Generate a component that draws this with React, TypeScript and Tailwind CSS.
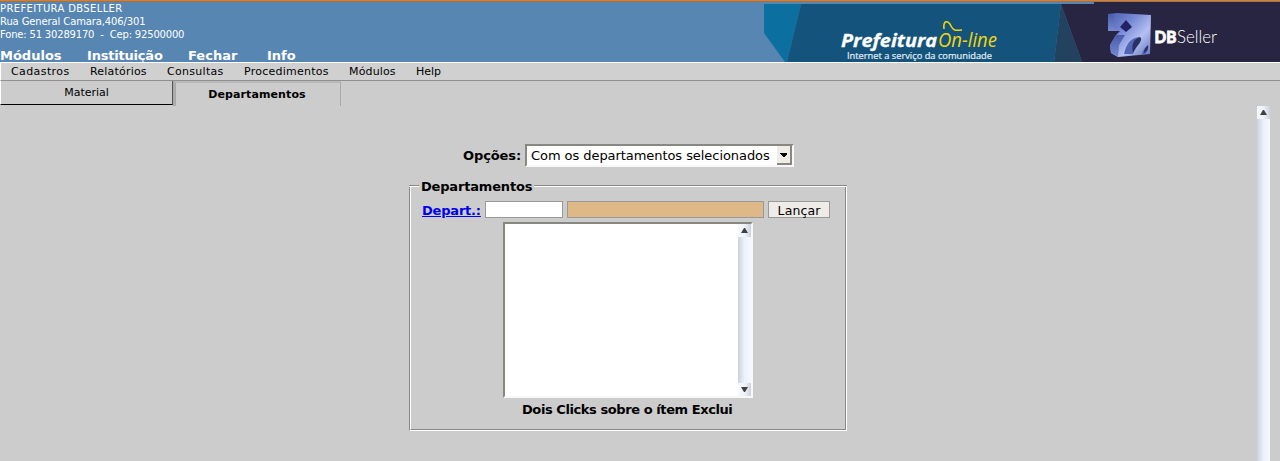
import type { ReactNode } from "react";

const headerLinks = [
  { label: "Módulos", cls: "w-[87px]" },
  { label: "Instituição", cls: "w-[101px] tracking-[-0.2px]" },
  { label: "Fechar", cls: "w-[79px]" },
  { label: "Info", cls: "w-[60px]" },
];

const menuItems = [
  { label: "Cadastros", cls: "w-[79px] tracking-[0.4px]" },
  { label: "Relatórios", cls: "w-[77px] tracking-[0.2px]" },
  { label: "Consultas", cls: "w-[77px] tracking-[0.3px]" },
  { label: "Procedimentos", cls: "w-[105px] tracking-[0.25px]" },
  { label: "Módulos", cls: "w-[67px] tracking-[0.15px]" },
  { label: "Help", cls: "w-[60px]" },
];

function Arrow({ down = false }: { down?: boolean }) {
  return (
    <div className="flex h-[13px] w-[13px] shrink-0 items-center justify-center bg-linear-to-r from-[#f7f9ff] via-[#eef2fa] to-[#ccd1dc]">
      <svg width="7" height="5" viewBox="0 0 7 5">
        <path d={down ? "M0 0H7L4 5H3Z" : "M3 0H4L7 5H0Z"} fill="#404040" />
      </svg>
    </div>
  );
}

function Track({ children }: { children?: ReactNode }) {
  return (
    <div className="flex w-[13px] shrink-0 flex-col justify-between bg-linear-to-r from-[#ccd1de] via-[#edf1fb] to-[#f5f8ff]">
      <Arrow />
      {children}
    </div>
  );
}

function Banner() {
  return (
    <svg width="516" height="60" viewBox="764 2 516 60" className="shrink-0">
      <defs>
        <linearGradient id="cube" x1="0" y1="0" x2="1" y2="1">
          <stop offset="0" stopColor="#4a5cac" />
          <stop offset=".35" stopColor="#7488d4" />
          <stop offset=".65" stopColor="#b4c0f2" />
          <stop offset="1" stopColor="#6272bd" />
        </linearGradient>
        <linearGradient id="side" x1="0" y1="0" x2="0" y2="1">
          <stop offset="0" stopColor="#4b5ba8" />
          <stop offset="1" stopColor="#7689d2" />
        </linearGradient>
      </defs>
      <path d="M764 4H801L787 62H785L764 33Z" fill="#0b6f9f" />
      <path d="M801 4H1061L1054 62H787Z" fill="#14547c" />
      <path d="M1061 4L1082 62H1054Z" fill="#22425f" />
      <path d="M1061 4H1094V2H1280V62H1082Z" fill="#272541" />
      <g fontFamily="Open Sans, sans-serif">
        <text x="841" y="47" fontSize="18.5" fontWeight="700" fontStyle="italic" fill="#fff" stroke="#fff" strokeWidth=".3" textLength="96" lengthAdjust="spacingAndGlyphs">Prefeitura</text>
        <text x="938" y="47" fontSize="20" fontStyle="italic" fill="#f2d60e" textLength="59" lengthAdjust="spacingAndGlyphs">On-line</text>
        <text x="847" y="59" fontSize="9.5" fill="#e6eef4" stroke="#e6eef4" strokeWidth=".2" textLength="145" lengthAdjust="spacingAndGlyphs">Internet a serviço da comunidade</text>
      </g>
      <path d="M944 29C943 20 948 20 951 26C954 32 957 30 962 30" fill="none" stroke="#f2d60e" strokeWidth="1.6" />
      <path d="M1108 14L1117 13L1151 15L1150 54L1118 57L1111 53L1110 45L1116 35L1120 31L1108 31Z" fill="url(#cube)" />
      <path d="M1108 14L1114 16V29L1120 31H1108Z" fill="url(#side)" />
      <path d="M1116 35L1110 45L1111 53L1118 57L1119 45L1125 35Z" fill="url(#side)" />
      <path d="M1126 20L1132 27L1126 32L1120 27Z" fill="#252165" />
      <path d="M1124 54C1126 45 1130 38 1139 37C1144 40 1136 43 1133 54ZM1142 54C1143 50 1146 46 1148 46Q1149 50 1145 54Z" fill="#5366b5" />
      <path d="M1133 53C1131 44 1134 39 1140 37C1144 40 1137 45 1133 53ZM1144 53Q1144 48 1148 45Q1149 50 1144 53Z" fill="#293064" />
      <g fontFamily="Lato, sans-serif" fill="#fff">
        <text x="1154.5" y="43" fontSize="17.5" fontWeight="900" stroke="#fff" strokeWidth=".8" textLength="22" lengthAdjust="spacingAndGlyphs">DB</text>
        <text x="1177" y="43" fontSize="18.5" fontWeight="300" textLength="40" lengthAdjust="spacingAndGlyphs">Seller</text>
      </g>
    </svg>
  );
}

export default function App() {
  return (
    <div className="flex h-[461px] w-[1280px] flex-col overflow-hidden bg-[#ccc] font-['DejaVu_Sans',sans-serif] text-black">
      <header className="flex h-[62px] shrink-0 flex-col bg-[#5786b2]">
        <div className="h-[2px] shrink-0 border-b border-[#a07250] bg-[#d28133]" />
        <div className="flex h-[60px] justify-between">
          <div className="flex flex-col text-white">
            <div className="whitespace-pre text-[10px] leading-[13px]">
              <div className="tracking-[0.36px]">PREFEITURA DBSELLER</div>
              <div className="tracking-[-0.12px]">Rua General Camara,406/301</div>
              <div className="tracking-[-0.18px]">Fone: 51 30289170  -  Cep: 92500000</div>
            </div>
            <nav className="mt-[7px] flex text-[13px] font-bold leading-[16px]">
              {headerLinks.map((l) => <div key={l.label} className={l.cls}>{l.label}</div>)}
            </nav>
          </div>
          <Banner />
        </div>
      </header>
      <nav className="flex h-[19px] shrink-0 border-b border-l border-t border-b-[#909090] border-l-white border-t-white bg-[#d0d0d0] pl-[10px] text-[11px] leading-[17px]">
        {menuItems.map((m) => <div key={m.label} className={m.cls}>{m.label}</div>)}
      </nav>
      <div className="flex h-[25px] shrink-0 text-[11px]">
        <div className="h-[24px] w-[173px] border-b border-l border-r border-b-black border-l-white border-r-[#555] text-center leading-[23px]">Material</div>
        <div className="h-[25px] w-[168px] border-l-[3px] border-r border-t-2 border-[#aaa] border-t-[#bababa] pr-[2px] text-center font-bold leading-[23px] tracking-[0.1px]">Departamentos</div>
      </div>
      <main className="flex h-[355px] pr-[10px]">
        <div className="flex w-[1257px] flex-col pt-[38px] text-[13px]">
          <div className="ml-[463px] flex h-[23px] items-center">
            <b className="w-[62px] shrink-0 tracking-[-0.1px]">Opções:</b>
            <div className="flex h-[23px] w-[269px] border-2 border-b-[#f8f8f8] border-l-[#888881] border-r-[#f8f8f8] border-t-[#888881] bg-white pl-[4px]">
              <span className="w-[246px] shrink-0 whitespace-nowrap leading-[19px] tracking-[-0.06px]">Com os departamentos selecionados</span>
              <div className="flex h-[19px] w-[15px] shrink-0 items-center justify-center border-b-2 border-r-2 border-[#888881] bg-[#efebe7]">
                <svg width="7" height="4" viewBox="0 0 7 4" shapeRendering="crispEdges"><path d="M0 0H7V1L4 4H3L0 1Z" /></svg>
              </div>
            </div>
          </div>
          <section className="ml-[409px] mt-[11px] flex h-[253px] w-[438px] flex-col">
            <div className="flex h-[16px] items-center">
              <div className="h-[2px] w-[10px] border-t border-[#888] bg-white" />
              <b className="w-[115px] whitespace-nowrap pl-[2px] pt-[2px] leading-[16px] tracking-[-0.18px]">Departamentos</b>
              <div className="h-[2px] flex-1 border-t border-[#888] bg-white" />
            </div>
            <div className="-mt-[7px] flex h-[244px] border border-t-0 border-white border-l-[#888]">
              <div className="flex flex-1 flex-col border-b border-l border-r border-b-[#888] border-l-white border-r-[#888] pl-[11px] pt-[14px]">
                <div className="flex h-[17px] items-center">
                  <b className="w-[63px] pt-[2px] tracking-[-0.2px] text-[#00e] underline">Depart.:</b>
                  <div className="mr-[4px] h-[17px] w-[78px] border border-[#999] bg-white" />
                  <div className="mr-[4px] h-[17px] w-[197px] border border-[#999] bg-[#deb887]" />
                  <button className="h-[17px] w-[62px] border border-[#999] bg-[#efebe7] text-[12.5px] leading-[18px] tracking-[0.1px]">Lançar</button>
                </div>
                <div className="ml-[81px] mt-[4px] flex h-[176px] w-[250px] border-2 border-b-[#f8f8f8] border-l-[#888881] border-r-[#f8f8f8] border-t-[#888881] bg-white">
                  <div className="flex-1" />
                  <Track><Arrow down /></Track>
                </div>
                <b className="ml-[100px] whitespace-nowrap pt-[3px] leading-[17px] tracking-[-0.42px]">Dois Clicks sobre o ítem Exclui</b>
              </div>
            </div>
          </section>
        </div>
        <Track />
      </main>
    </div>
  );
}
